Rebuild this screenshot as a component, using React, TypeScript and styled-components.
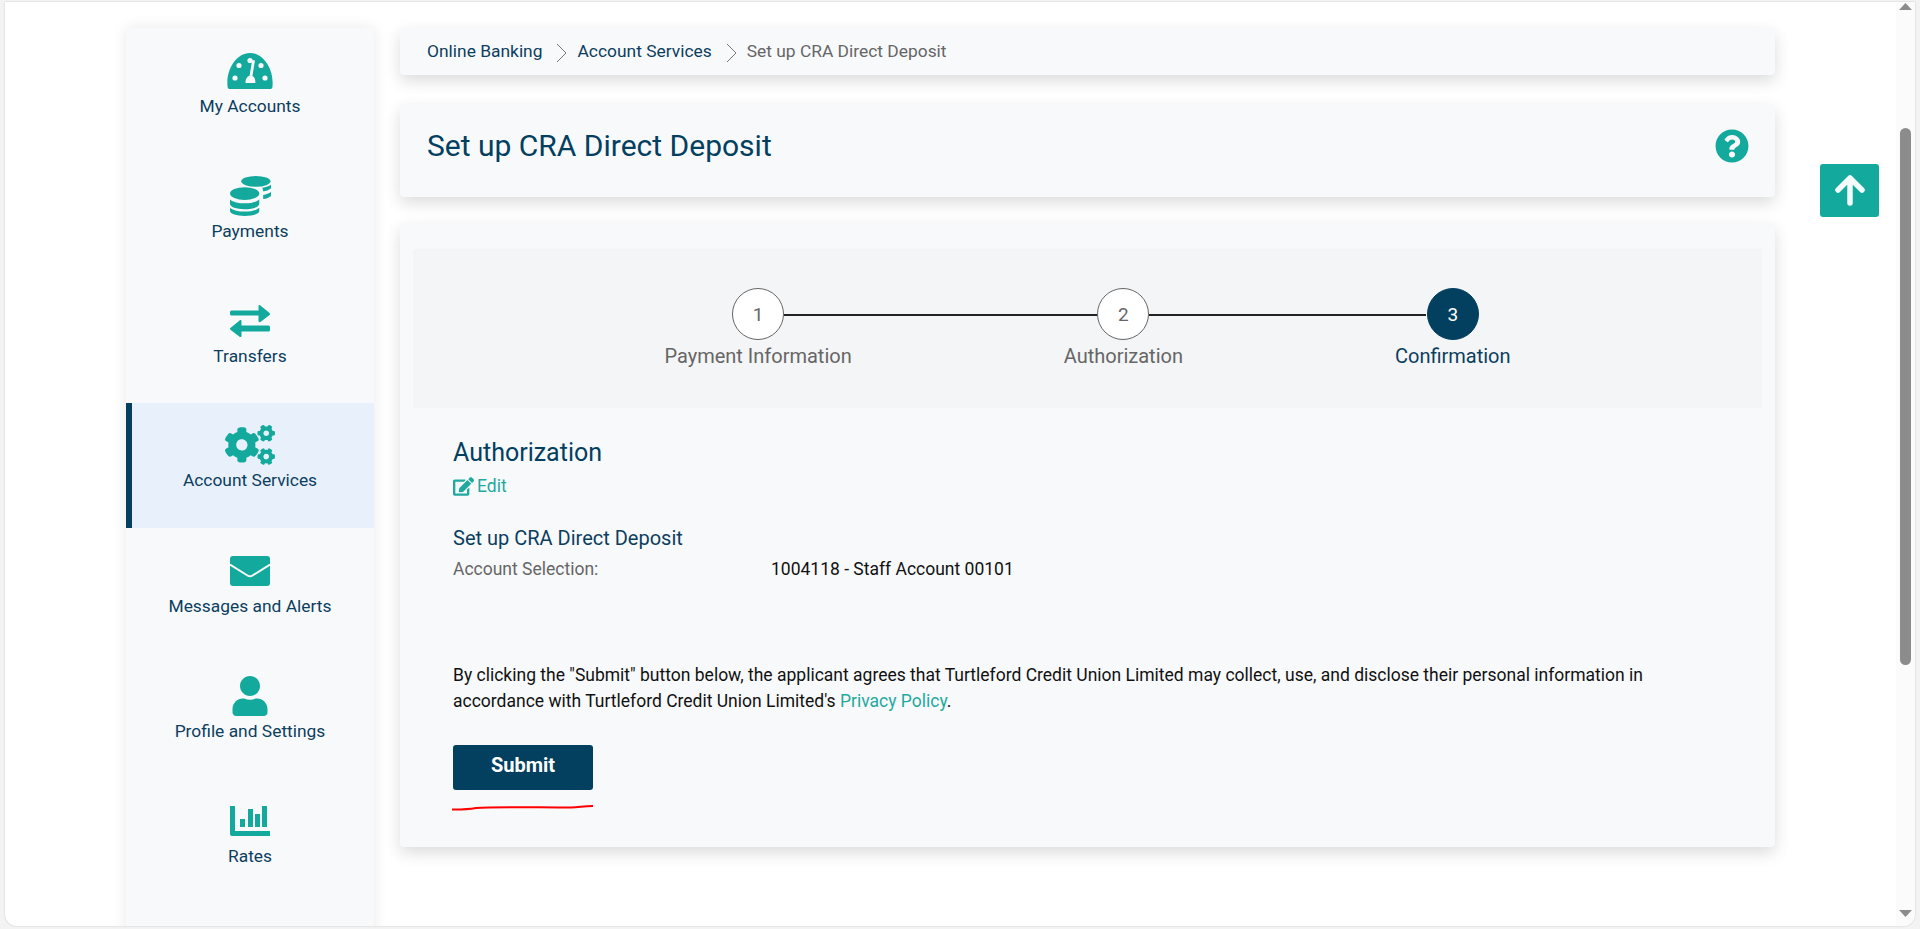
import * as React from "react";
import styled, { createGlobalStyle } from "styled-components";
import { FaCogs, FaEdit, FaQuestionCircle, FaUser } from "react-icons/fa";

const GlobalStyle = createGlobalStyle`
  html, body {
    margin: 0;
    height: 929px;
    overflow: hidden;
    background: #f3f3f3;
    font-family: Roboto, "Liberation Sans", sans-serif;
  }
  * { box-sizing: border-box; }
`;

const Frame = styled.div`
  position: relative;
  height: 924px;
  margin: 2px 5px 0;
  background: #fff;
  border-radius: 0 0 12px 12px;
  box-shadow: 0 0 2px rgba(0, 0, 0, 0.2);
  overflow: hidden;
  display: flex;
`;

const Page = styled.div`
  flex: 1;
  display: flex;
  gap: 26px;
  padding: 26px 0 0 121px;
`;

const Sidebar = styled.nav`
  width: 248px;
  height: 930px;
  background: #f8f9fb;
  box-shadow: 0 0 14px rgba(0, 0, 0, 0.09);
`;

const NavItem = styled.a<{ $active?: boolean }>`
  height: 125px;
  display: flex;
  flex-direction: column;
  align-items: center;
  padding-top: ${(p) => (p.$active ? "22px" : "23px")};
  color: #0c3e5e;
  font-size: 17.4px;
  line-height: 20px;
  background: ${(p) => (p.$active ? "#e8f0fb" : "transparent")};
  border-left: ${(p) => (p.$active ? "6px solid #03405f" : "0")};
  padding-right: ${(p) => (p.$active ? "6px" : "0")};
`;

const NavIcon = styled.span`
  height: 40px;
  margin-bottom: 5px;
  display: flex;
  align-items: center;
  justify-content: center;
  color: #13a99d;
`;

const Main = styled.main`
  width: 1375px;
  display: flex;
  flex-direction: column;
`;

const Card = styled.section`
  background: #f8f9fb;
  border-radius: 4px;
  box-shadow: 0 6px 16px rgba(0, 0, 0, 0.14);
`;

const Breadcrumb = styled(Card)`
  height: 47px;
  display: flex;
  align-items: center;
  padding: 0 0 2px 27px;
  font-size: 17.4px;
  color: #0c3e5e;
`;

const Crumb = styled.span<{ $current?: boolean }>`
  color: ${(p) => (p.$current ? "#666" : "#0c3e5e")};
`;

const CrumbArrow = styled.svg`
  width: 14px;
  height: 20px;
  margin: 4px 8px 0 13px;
`;

const TitleCard = styled(Card)`
  height: 93px;
  margin-top: 29px;
  display: flex;
  align-items: center;
  justify-content: space-between;
  padding: 0 26px 10px 27px;
`;

const Title = styled.h1`
  margin: 0;
  font-size: 30px;
  font-weight: 400;
  color: #03405f;
`;

const HelpIcon = styled.span`
  display: flex;
  color: #13a99d;
`;

const FormCard = styled(Card)`
  height: 624px;
  margin-top: 26px;
  padding: 26px 13px 0 13px;
`;

const StepPanel = styled.div`
  height: 159px;
  background: #f4f5f7;
  display: flex;
  justify-content: center;
  gap: 212px;
  padding: 39px 0 0 0;
`;

const Step = styled.div`
  position: relative;
  display: flex;
  flex-direction: column;
  align-items: center;
`;

const StepCircle = styled.div<{ $done?: boolean }>`
  width: 52px;
  height: 52px;
  border-radius: 50%;
  display: flex;
  align-items: center;
  justify-content: center;
  font-size: 19px;
  background: ${(p) => (p.$done ? "#03405f" : "#fff")};
  color: ${(p) => (p.$done ? "#fff" : "#666")};
  border: 1px solid ${(p) => (p.$done ? "#03405f" : "#666")};
`;

const StepLine = styled.div<{ $length: number }>`
  position: absolute;
  top: 26px;
  left: calc(50% + 26px);
  width: ${(p) => p.$length}px;
  height: 2px;
  background: #222;
`;

const StepLabel = styled.div<{ $done?: boolean }>`
  margin-top: 4px;
  font-size: 20px;
  line-height: 24px;
  color: ${(p) => (p.$done ? "#0c3e5e" : "#666")};
`;

const Body = styled.div`
  padding: 31px 26px 0 40px;
`;

const Heading = styled.h2`
  margin: 0;
  font-size: 25px;
  font-weight: 400;
  line-height: 28px;
  color: #03405f;
`;

const EditLink = styled.a`
  margin-top: 7px;
  display: flex;
  align-items: center;
  gap: 3px;
  font-size: 17.5px;
  line-height: 24px;
  color: #1fa99f;
`;

const SubHeading = styled.h3`
  margin: 28px 0 0;
  font-size: 20px;
  font-weight: 400;
  line-height: 24px;
  color: #0c3e5e;
`;

const Field = styled.div`
  margin-top: 7px;
  display: flex;
  font-size: 17.5px;
  line-height: 24px;
`;

const FieldLabel = styled.span`
  width: 318px;
  color: #666;
`;

const FieldValue = styled.span`
  color: #111;
`;

const Notice = styled.p`
  margin: 81px 0 0;
  font-size: 17.5px;
  line-height: 26px;
  color: #111;
`;

const NoticeLink = styled.a`
  color: #1fa99f;
`;

const SubmitButton = styled.button`
  display: block;
  width: 140px;
  height: 45px;
  margin-top: 31px;
  padding: 0 0 5px;
  border: 0;
  border-radius: 3px;
  background: #03405f;
  color: #fff;
  font: 700 20px Roboto, sans-serif;
`;

const RedMark = styled.svg`
  display: block;
  width: 144px;
  height: 8px;
  margin: 13px 0 0 -2px;
`;

const TopButton = styled.button`
  position: absolute;
  left: 1815px;
  top: 162px;
  width: 59px;
  height: 53px;
  padding: 0;
  border: 0;
  border-radius: 3px;
  background: #13a99d;
  display: flex;
  align-items: center;
  justify-content: center;
`;

const ScrollTrack = styled.div`
  position: relative;
  width: 19px;
  background: #fbfbfb;
`;

const ScrollThumb = styled.div`
  position: absolute;
  top: 126px;
  left: 4px;
  width: 11px;
  height: 537px;
  border-radius: 6px;
  background: #8c8c8c;
`;

const ScrollArrow = styled.svg<{ $down?: boolean }>`
  position: absolute;
  left: 3px;
  width: 13px;
  height: 7px;
  ${(p) => (p.$down ? "bottom: 9px;" : "top: 1px;")}
`;

const GaugeIcon = () => (
  <svg width="46" height="36" viewBox="0 0 46 36">
    <path d="M2 36a3 3 0 0 1-1.5-3C-1 17 9 0 23 0s24 17 22.5 33a3 3 0 0 1-1.5 3z" fill="currentColor" />
    <g fill="#f8f9fb">
      <circle cx="8" cy="25" r="2.6" />
      <circle cx="12" cy="12.5" r="2.6" />
      <circle cx="23" cy="7.5" r="2.6" />
      <circle cx="34" cy="12.5" r="2.6" />
      <circle cx="38" cy="25" r="2.6" />
      <path d="M28 7.5l-2.6 15.5c2.2 1.2 3 3.2 3 7h-10c0-4 1.6-6.6 4.2-7.3l2.6-15.7z" />
    </g>
  </svg>
);

const CoinsIcon = () => (
  <svg width="41" height="40" viewBox="0 0 42 41">
    <g fill="currentColor">
      <ellipse cx="26.5" cy="5.5" rx="15" ry="5.5" />
      <path d="M33 12c4-.4 7-1.5 9-3v3.5c-1.500 1.500-4.500 2.700-8 3.200-.2-1.400-.5-2.600-1-3.700z" />
      <path d="M34 19.500c3.200-.5 6-1.500 8-3v4c-1.600 1.500-4.500 2.700-8 3.200z" />
      <ellipse cx="15" cy="18" rx="15" ry="6.500" />
      <path d="M0 24c3 2.600 8.500 4 15 4s12-1.400 15-4v4.500c0 3.500-6.700 5.500-15 5.500S0 32 0 28.500z" />
      <path d="M0 32.500c3 2.600 8.500 4 15 4s12-1.400 15-4v3.500c0 3-6.700 5-15 5S0 39 0 36z" />
    </g>
  </svg>
);

const TransferIcon = () => (
  <svg width="40" height="32" viewBox="0 0 40 32">
    <g fill="currentColor">
      <path d="M1.500 5.500h27V1.200c0-1 1.200-1.500 1.900-.8l9.200 7.700c.5.500.5 1.300 0 1.800l-9.200 7c-.7.600-1.900.1-1.900-.8v-4.600h0V10.500h-27a1.500 1.500 0 0 1-1.500-1.500V7a1.500 1.500 0 0 1 1.500-1.500z" />
      <path d="M38.500 20.500h-27v-4.300c0-1-1.200-1.500-1.900-.8L.4 22.900c-.5.500-.5 1.300 0 1.800l9.200 7c.7.600 1.900.1 1.900-.8v-4.400h27A1.500 1.500 0 0 0 40 25v-3a1.500 1.500 0 0 0-1.500-1.500z" />
    </g>
  </svg>
);

const MailIcon = () => (
  <svg width="40" height="30" viewBox="0 0 40 30">
    <path d="M3 0h34a3 3 0 0 1 3 3v24a3 3 0 0 1-3 3H3a3 3 0 0 1-3-3V3a3 3 0 0 1 3-3z" fill="currentColor" />
    <path d="M0 8.500l17.500 11c1.500 1 3.500 1 5 0L40 8.500" fill="none" stroke="#f8f9fb" strokeWidth="2" />
  </svg>
);

const RatesIcon = () => (
  <svg width="40" height="30" viewBox="0 0 40 30">
    <g fill="currentColor">
      <path d="M0 0h5v25h35v5H2a2 2 0 0 1-2-2z" />
      <rect x="10" y="13" width="5" height="8" />
      <rect x="18" y="3" width="5" height="18" />
      <rect x="25" y="8" width="5" height="13" />
      <rect x="32" y="0" width="5" height="21" />
    </g>
  </svg>
);

const navItems = [
  { label: "My Accounts", icon: <GaugeIcon /> },
  { label: "Payments", icon: <CoinsIcon /> },
  { label: "Transfers", icon: <TransferIcon /> },
  { label: "Account Services", icon: <FaCogs size={50} />, active: true },
  { label: "Messages and Alerts", icon: <MailIcon /> },
  { label: "Profile and Settings", icon: <FaUser size={40} /> },
  { label: "Rates", icon: <RatesIcon /> },
];

const steps = [
  { n: 1, label: "Payment Information", line: 314 },
  { n: 2, label: "Authorization", line: 277 },
  { n: 3, label: "Confirmation", done: true },
];

const Chevron = () => (
  <CrumbArrow viewBox="0 0 14 20">
    <path d="M2 1l9 9-9 9" fill="none" stroke="#777" strokeWidth="1" />
  </CrumbArrow>
);

export default function App() {
  return (
    <>
      <GlobalStyle />
      <Frame>
        <Page>
          <Sidebar>
            {navItems.map((x) => (
              <NavItem key={x.label} $active={x.active}>
                <NavIcon>{x.icon}</NavIcon>
                {x.label}
              </NavItem>
            ))}
          </Sidebar>
          <Main>
            <Breadcrumb>
              <Crumb>Online Banking</Crumb>
              <Chevron />
              <Crumb>Account Services</Crumb>
              <Chevron />
              <Crumb $current>Set up CRA Direct Deposit</Crumb>
            </Breadcrumb>
            <TitleCard>
              <Title>Set up CRA Direct Deposit</Title>
              <HelpIcon>
                <FaQuestionCircle size={34} />
              </HelpIcon>
            </TitleCard>
            <FormCard>
              <StepPanel>
                {steps.map((s) => (
                  <Step key={s.n}>
                    <StepCircle $done={s.done}>{s.n}</StepCircle>
                    {s.line && <StepLine $length={s.line} />}
                    <StepLabel $done={s.done}>{s.label}</StepLabel>
                  </Step>
                ))}
              </StepPanel>
              <Body>
                <Heading>Authorization</Heading>
                <EditLink>
                  <FaEdit size={21} />
                  Edit
                </EditLink>
                <SubHeading>Set up CRA Direct Deposit</SubHeading>
                <Field>
                  <FieldLabel>Account Selection:</FieldLabel>
                  <FieldValue>1004118 - Staff Account 00101</FieldValue>
                </Field>
                <Notice>
                  By clicking the "Submit" button below, the applicant agrees that Turtleford Credit Union Limited may
                  collect, use, and disclose their personal information in
                  <br />
                  accordance with Turtleford Credit Union Limited's <NoticeLink>Privacy Policy</NoticeLink>.
                </Notice>
                <SubmitButton>Submit</SubmitButton>
                <RedMark viewBox="0 0 144 8">
                  <path d="M1 6.500c10 0 14 .2 24-1.500 20-1.500 60-.500 95-.500 8 0 12-1.500 22-1.500" fill="none" stroke="#f00" strokeWidth="2" />
                </RedMark>
              </Body>
            </FormCard>
          </Main>
        </Page>
        <TopButton>
          <svg width="34" height="34" viewBox="0 0 34 34">
            <path d="M17 29V5M5 16L17 4l12 12" fill="none" stroke="#f4fbfb" strokeWidth="5.500" strokeLinecap="round" strokeLinejoin="round" />
          </svg>
        </TopButton>
        <ScrollTrack>
          <ScrollArrow viewBox="0 0 13 7">
            <path d="M6.500 0L13 7H0z" fill="#8c8c8c" />
          </ScrollArrow>
          <ScrollThumb />
          <ScrollArrow $down viewBox="0 0 13 7">
            <path d="M0 0h13L6.500 7z" fill="#8c8c8c" />
          </ScrollArrow>
        </ScrollTrack>
      </Frame>
    </>
  );
}
